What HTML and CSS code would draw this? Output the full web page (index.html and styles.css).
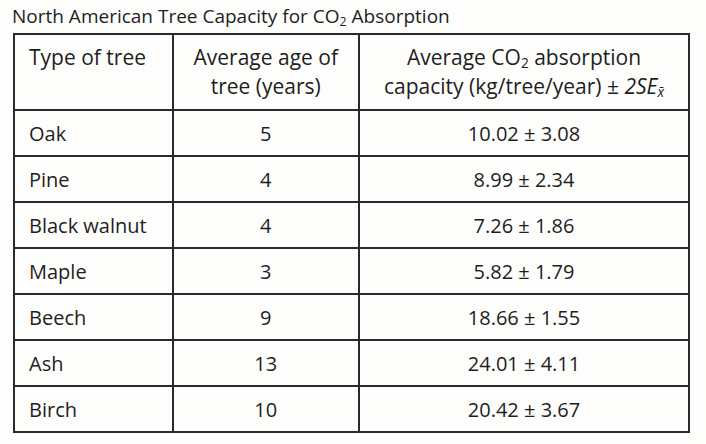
FILE: index.html
```html
<!DOCTYPE html>
<html lang="en">
<head>
    <meta charset="UTF-8">
    <meta name="viewport" content="width=device-width, initial-scale=1.0">
    <title>North American Tree Capacity for CO2 Absorption</title>
    <link rel="stylesheet" href="styles.css">
</head>
<body>
    <div class="page">
        <h1 class="title">North American Tree Capacity for CO<sub>2</sub> Absorption</h1>
        <table class="trees">
            <thead>
                <tr>
                    <th class="col-type">Type of tree</th>
                    <th class="col-age">Average age of<br>tree (years)</th>
                    <th class="col-cap">Average CO<sub>2</sub> absorption<br>capacity (kg/tree/year) &plusmn; <i>2SE</i><sub><i>x&#772;</i></sub></th>
                </tr>
            </thead>
            <tbody>
                <tr><td>Oak</td><td>5</td><td>10.02 &plusmn; 3.08</td></tr>
                <tr><td>Pine</td><td>4</td><td>8.99 &plusmn; 2.34</td></tr>
                <tr><td>Black walnut</td><td>4</td><td>7.26 &plusmn; 1.86</td></tr>
                <tr><td>Maple</td><td>3</td><td>5.82 &plusmn; 1.79</td></tr>
                <tr><td>Beech</td><td>9</td><td>18.66 &plusmn; 1.55</td></tr>
                <tr><td>Ash</td><td>13</td><td>24.01 &plusmn; 4.11</td></tr>
                <tr><td>Birch</td><td>10</td><td>20.42 &plusmn; 3.67</td></tr>
            </tbody>
        </table>
    </div>
</body>
</html>
```

FILE: styles.css
```css
* {
    margin: 0;
    padding: 0;
    box-sizing: border-box;
}
body {
    background: #fdfdfb;
    color: #1e1e1e;
    font-family: "Open Sans", sans-serif;
}
.page {
    padding: 4px 0 0 12px;
}
.title {
    font-size: 19px;
    font-weight: 500;
    line-height: 24px;
}
.title sub, .trees sub {
    font-size: 0.65em;
    line-height: 0;
    vertical-align: -0.25em;
}
.trees {
    margin-top: 5px;
    margin-left: 1px;
    border-collapse: collapse;
    width: 677px;
    font-size: 20px;
}
.trees th, .trees td {
    border: 2px solid #2a2a2a;
    font-weight: 500;
    text-align: center;
    vertical-align: middle;
}
.trees th {
    height: 76px;
    font-size: 21px;
    line-height: 29px;
    vertical-align: top;
    padding-top: 8px;
}
.trees td {
    height: 46px;
}
.trees th:first-child, .trees td:first-child {
    text-align: left;
    padding-left: 14px;
}
.col-type { width: 159px; }
.col-age { width: 187px; }
.col-cap { width: 331px; }
.trees i {
    font-style: italic;
}
```
